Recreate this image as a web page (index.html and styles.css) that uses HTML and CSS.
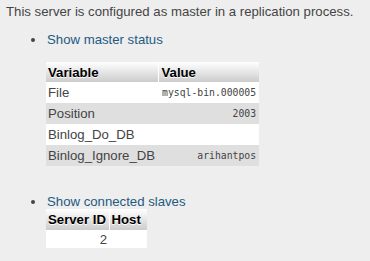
FILE: index.html
```html
<!DOCTYPE html>
<html>
<head>
<meta charset="utf-8">
<link rel="stylesheet" href="styles.css">
</head>
<body>
<p class="intro">This server is configured as master in a replication process.</p>
<ul class="links">
  <li>
    <a href="#" class="link">Show master status</a>
    <table class="data master">
      <thead>
        <tr><th class="c-var">Variable</th><th class="c-val">Value</th></tr>
      </thead>
      <tbody>
        <tr class="odd"><td>File</td><td class="mono">mysql-bin.000005</td></tr>
        <tr class="even"><td>Position</td><td class="mono">2003</td></tr>
        <tr class="odd"><td>Binlog_Do_DB</td><td class="mono"></td></tr>
        <tr class="even"><td>Binlog_Ignore_DB</td><td class="mono">arihantpos</td></tr>
      </tbody>
    </table>
  </li>
  <li class="second">
    <a href="#" class="link">Show connected slaves</a>
    <table class="data slaves">
      <thead>
        <tr><th class="c-id">Server ID</th><th class="c-host">Host</th></tr>
      </thead>
      <tbody>
        <tr class="odd"><td class="num">2</td><td></td></tr>
      </tbody>
    </table>
  </li>
</ul>
</body>
</html>
```

FILE: styles.css
```css
html, body {
  margin: 0;
  padding: 0;
  background: #eeeeee;
}
body {
  font-family: "Liberation Sans", Arial, sans-serif;
  font-size: 13.2px;
  color: #444444;
  padding: 4px 6px 0 6px;
}
.intro {
  margin: 0;
  line-height: 15px;
}
.links {
  margin: 13px 0 0 0;
  padding: 0 0 0 40px;
  line-height: 15px;
}
.links li {
  margin: 0;
}
.second {
  margin-top: 28px !important;
}
.link {
  color: #235a81;
  text-decoration: none;
  margin-left: 1px;
}
.data {
  border-collapse: collapse;
  table-layout: fixed;
  margin: 15px 0 0 0;
  font-size: 13.2px;
  white-space: nowrap;
}
.master {
  width: 213px;
}
.slaves {
  width: 101px;
  margin-top: 0;
}
.data th {
  background: linear-gradient(#ffffff, #cccccc);
  color: #000000;
  font-weight: bold;
  text-align: left;
  text-shadow: 0 1px 0 #ffffff;
  padding: 0 2px;
  height: 20px;
  box-sizing: border-box;
  vertical-align: middle;
}
.data th + th {
  border-left: 1px solid #ffffff;
}
.data td {
  padding: 0 2px;
  height: 21px;
  vertical-align: middle;
  color: #444444;
  overflow: hidden;
}
.slaves th {
  height: 21px;
}
.slaves td {
  height: 18px;
}
.odd td {
  background: #ffffff;
}
.even td {
  background: #dfdfdf;
}
.c-var { width: 112px; }
.c-val { width: 101px; padding-left: 3px !important; }
.c-id { width: 63px; }
.c-host { width: 38px; }
.mono {
  font-family: "DejaVu Sans Mono", monospace;
  font-size: 9.75px;
  text-align: right;
  padding-right: 3px !important;
}
.num {
  text-align: right;
}
```
